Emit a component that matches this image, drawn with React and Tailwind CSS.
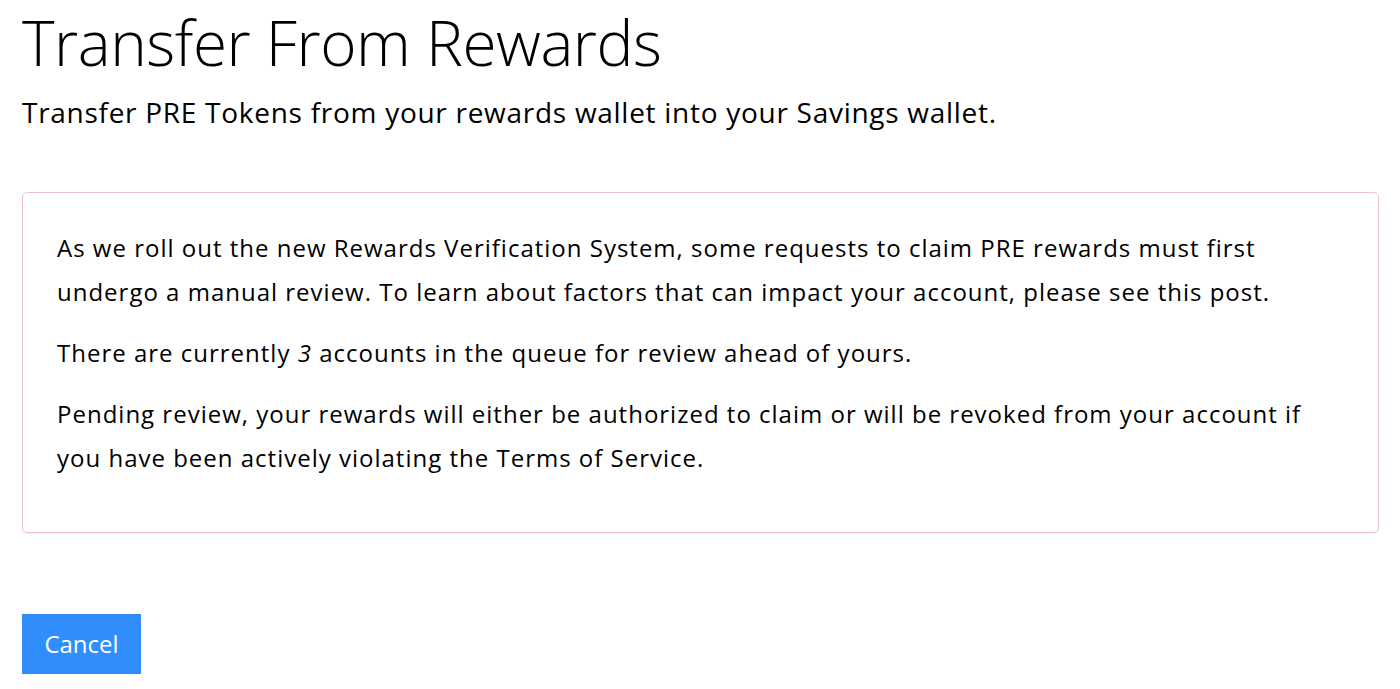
export default function App() {
  return (
    <div className="min-h-screen bg-white pl-[22px] pr-[21px] font-['Open_Sans','Noto_Sans',sans-serif] text-black">
      <h1 className="pt-[4px] text-[62px] leading-[76px] font-light tracking-[-0.45px]">Transfer From Rewards</h1>
      <p className="mt-[14px] text-[28px] leading-[36px] tracking-[0.72px]">
        Transfer PRE Tokens from your rewards wallet into your Savings wallet.
      </p>

      <div className="mt-[62px] rounded-[5px] border border-[#efc3c8] px-[34px] pt-[33px] pb-[52px] text-[24px] leading-[44px] tracking-[1px] shadow-[0_1px_2px_rgba(0,0,0,0.06)]">
        <p>
          As we roll out the new Rewards Verification System, some requests to claim PRE rewards must first
          <br />
          undergo a manual review. To learn about factors that can impact your account, please see this post.
        </p>
        <p className="mt-[17px]">
          There are currently <em>3</em> accounts in the queue for review ahead of yours.
        </p>
        <p className="mt-[17px]">
          Pending review, your rewards will either be authorized to claim or will be revoked from your account if
          <br />
          you have been actively violating the Terms of Service.
        </p>
      </div>

      <button className="mt-[81px] h-[60px] w-[119px] bg-[#2f8dfc] text-[24px] text-white">Cancel</button>
    </div>
  );
}
